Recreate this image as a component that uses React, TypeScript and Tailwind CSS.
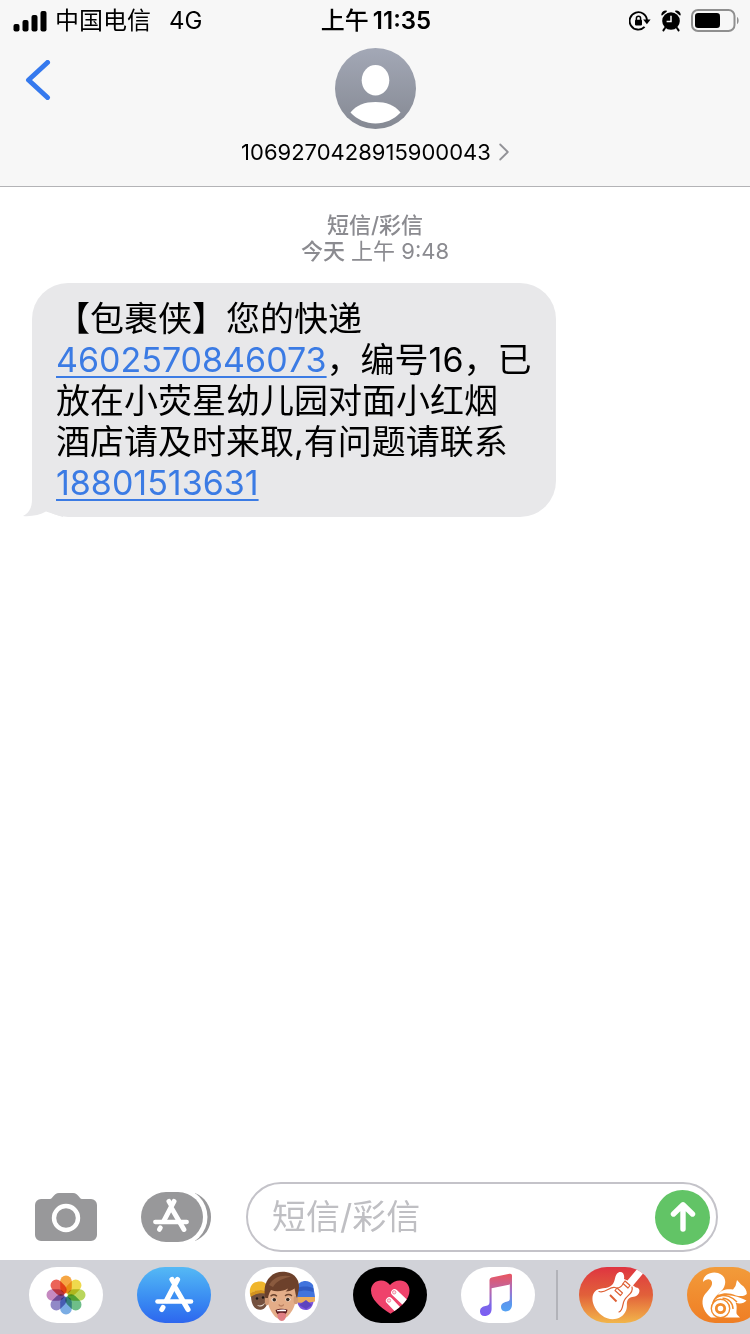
import React from "react";

const FONT = "font-['Inter','Noto_Sans_CJK_SC',sans-serif]";

function SignalBars() {
  return (
    <svg width="34" height="22" viewBox="0 0 34 22" aria-hidden="true">
      <rect x="0.500" y="14" width="6" height="7.500" rx="2" />
      <rect x="9.500" y="10" width="6" height="11.500" rx="2" />
      <rect x="18.500" y="5" width="6" height="16.500" rx="2" />
      <rect x="27.500" y="1" width="6" height="20.500" rx="2" />
    </svg>
  );
}

function RotationLock() {
  return (
    <svg width="22" height="20" viewBox="0 0 22 20" fill="none" aria-hidden="true">
      <path d="M15.6 15.9 A8.7 8.7 0 1 1 18 9.6" stroke="#000" strokeWidth="1.9" />
      <path d="M14.2 8.6 H21.6 L17.9 13.2 Z" fill="#000" />
      <rect x="6" y="8.8" width="7" height="5.6" rx="0.8" fill="#000" />
      <path d="M7.4 9 V7.4 a2.1 2.1 0 0 1 4.2 0 V9" stroke="#000" strokeWidth="1.5" />
    </svg>
  );
}

function AlarmClock() {
  return (
    <svg width="20" height="22" viewBox="0 0 20 22" fill="none" aria-hidden="true">
      <circle cx="10" cy="11" r="8.8" fill="#000" />
      <path d="M1 4.800 C1 2.400 3 1 5.200 1.200 Z M19 4.800 C19 2.400 17 1 14.800 1.200 Z" fill="#000" stroke="#000" strokeWidth="1.400" strokeLinejoin="round" />
      <path d="M4 18 L2.4 20.4 M16 18 L17.6 20.4" stroke="#000" strokeWidth="2" strokeLinecap="round" />
      <path d="M10 5.8 V11.6 H5.6" stroke="#f7f7f7" strokeWidth="1.5" />
    </svg>
  );
}

function Battery() {
  return (
    <svg width="48" height="24" viewBox="0 0 48 24" fill="none" aria-hidden="true">
      <rect x="1" y="1" width="42.5" height="21" rx="6" stroke="#8f8f8f" strokeWidth="2" />
      <rect x="4" y="4" width="25" height="15" rx="3.2" fill="#000" />
      <path d="M46 8 c2.2 1.2 2.2 6 0 7.2 Z" fill="#8f8f8f" />
    </svg>
  );
}

function Avatar() {
  return (
    <svg width="81" height="81" viewBox="0 0 81 81" aria-hidden="true">
      <defs>
        <linearGradient id="avatarFill" x1="0" y1="0" x2="0" y2="1">
          <stop offset="0" stopColor="#a3a8b6" />
          <stop offset="1" stopColor="#858993" />
        </linearGradient>
      </defs>
      <circle cx="40.5" cy="40.5" r="40.5" fill="url(#avatarFill)" />
      <ellipse cx="40.5" cy="32.3" rx="13.8" ry="15.3" fill="#fff" />
      <path d="M15.5 64.5 C21 57 30 54 40.5 54 C51 54 60 57 65.500 64.500 C59 71.500 50 75.500 40.500 75.500 C31 75.500 22 71.500 15.500 64.500 Z" fill="#fff" />
    </svg>
  );
}

function Camera() {
  return (
    <svg width="62" height="48" viewBox="0 0 62 48" aria-hidden="true">
      <path d="M6 6 H15 C18 6 18.500 0 24 0 H38 C43.500 0 44 6 47 6 H56 a6 6 0 0 1 6 6 V42 a6 6 0 0 1 -6 6 H6 a6 6 0 0 1 -6 -6 V12 a6 6 0 0 1 6 -6 Z" fill="#98989a" />
      <circle cx="31" cy="25" r="12" fill="none" stroke="#fff" strokeWidth="4.4" />
    </svg>
  );
}

function StoreStrokes() {
  return (
    <g fill="none" stroke="#fff" strokeLinecap="round" strokeLinejoin="round">
      <path d="M4 24.500 H37.500" strokeWidth="4.600" />
      <path d="M24 2.500 L13 23.500" strokeWidth="5.200" />
      <path d="M18.500 2.500 L20.500 6" strokeWidth="5.200" />
      <path d="M22 11 L34.500 32.500" strokeWidth="5.200" />
      <path d="M9.500 30.500 L8.300 32.500" strokeWidth="5" />
    </g>
  );
}

function AppDrawer() {
  return (
    <svg width="71" height="50" viewBox="0 0 71 50" aria-hidden="true">
      <path d="M54 1 C64 5 70 14 70 25 C70 36 64 45 54 49 Z" fill="#98989a" />
      <rect x="-2" y="-4" width="68.500" height="58" rx="29" fill="#fff" />
      <rect x="0" y="0" width="62" height="50" rx="25" fill="#98989a" />
      <g transform="translate(10.500 7) scale(0.940)">
        <StoreStrokes />
      </g>
    </svg>
  );
}

const petals = [
  { angle: 0, color: "#f6a13a" },
  { angle: 45, color: "#efd743" },
  { angle: 90, color: "#b5d453" },
  { angle: 135, color: "#66bb83" },
  { angle: 180, color: "#74a9e3" },
  { angle: 225, color: "#8b83c4" },
  { angle: 270, color: "#c283bd" },
  { angle: 315, color: "#ea5c50" },
];

function PhotosArt() {
  return (
    <svg viewBox="0 0 74 56" className="size-full" aria-hidden="true">
      <g style={{ isolation: "isolate" }}>
        {petals.map((p) => (
          <rect
            key={p.angle}
            x="31.200"
            y="8.500"
            width="11.600"
            height="18"
            rx="5.800"
            fill={p.color}
            opacity="0.950"
            transform={`rotate(${p.angle} 37 28)`}
            style={{ mixBlendMode: "multiply" }}
          />
        ))}
      </g>
      <circle cx="37" cy="28" r="1.600" fill="#fff" />
    </svg>
  );
}

function StoreArt() {
  return (
    <svg viewBox="0 0 74 56" className="size-full" aria-hidden="true">
      <g transform="translate(16.500 10)">
        <StoreStrokes />
      </g>
    </svg>
  );
}

function MemojiArt() {
  return (
    <svg viewBox="0 0 74 56" className="size-full" aria-hidden="true">
      <path d="M6 26 C5.500 38 10 44 17 42.500 C22 41.500 24 34 23 24 Z" fill="#74513f" />
      <path d="M5 27 C4 19 8 14.500 15 14.500 C20 14.500 23 17 23 24 C17 22 10 23 5 27 Z" fill="#f0b62c" />
      <path d="M5 26.500 C10 22.500 17 22.500 23 24 V27 C16 25.500 10 26.500 5.500 30 Z" fill="#d4931e" />
      <circle cx="12" cy="31.500" r="1.200" fill="#1e1512" />
      <circle cx="18" cy="30.500" r="1.200" fill="#1e1512" />
      <path d="M12 38 C15 39 18 38 20 35.500 C19 39.500 15 41 12 38 Z" fill="#e6d8cd" />
      <path d="M52 27 C51 40 56 43.500 62 43 C68 42 70 33 69 24 Z" fill="#7b55dc" />
      <path d="M52 20 C54 13 64 12 68 18 L70 30 H52 Z" fill="#4174dd" />
      <path d="M52 21 C58 19 64 19 68.500 21.500 V25 C63 23 58 23 52 25 Z" fill="#315cc4" />
      <path d="M52 30 H70 V34.500 C64 36 57 36 52 35.500 Z" fill="#e9ab5c" />
      <path d="M54 38 L61 33 L67 38 L61 42 Z" fill="#5d43bf" />
      <path d="M22 26 C22 33 23 39 26 44 C29 49 31.500 52 36 52 C41 52 44.500 48 47.500 43 C50.500 38 51 32 51 24 C46 14 27 14 22 26 Z" fill="#e4ad88" />
      <ellipse cx="22" cy="34" rx="2.200" ry="4.200" fill="#d29a75" />
      <ellipse cx="50.800" cy="33" rx="2.200" ry="4.200" fill="#d29a75" />
      <path d="M20.500 31 C18.500 24 19.500 15 25 10 C29 5.500 35 4.200 41 5 C50 6 56 14 53.500 24 C53 27 52.500 29 52 31 C50.500 29 50.500 25 49.500 21.500 C47 23.500 44 24.500 40.500 24.500 C42 23.500 42.500 22.500 43 21.500 C38 24.500 31 25 26 23 C24.500 25 23.500 28 23 31 Z" fill="#6d412b" />
      <path d="M24 18 C28 10 38 7 46 9.500 C39 11 31 14 28 20 Z" fill="#8a5a3e" />
      <path d="M26 28.800 C27.500 27.600 30 27.600 31.500 28.800 M40.500 28.500 C42 27.300 45 27.300 46.500 28.500" fill="none" stroke="#6b432e" strokeWidth="1.500" strokeLinecap="round" />
      <ellipse cx="29" cy="32.800" rx="2.600" ry="1.900" fill="#f5efe9" />
      <ellipse cx="43" cy="32.500" rx="2.600" ry="1.900" fill="#f5efe9" />
      <circle cx="29.300" cy="32.800" r="1.800" fill="#3b2a20" />
      <circle cx="42.800" cy="32.500" r="1.800" fill="#3b2a20" />
      <path d="M34.200 38 C35 39.400 37.500 39.400 38.300 38" fill="none" stroke="#b97f60" strokeWidth="1.500" strokeLinecap="round" />
      <path d="M30.500 43 C34 41.500 39 41.500 42.500 42.700 C42 46.500 40 48.500 36.500 48.500 C33 48.500 31 46.500 30.500 43 Z" fill="#5c1c20" />
      <path d="M32 43.200 C35 42.400 38.500 42.400 41 43 V44.200 H32 Z" fill="#fff" />
      <path d="M32.500 47 C34 45.500 39 45.500 40.800 46.800 C41.500 51 39.500 54 36.800 54 C34 54 32 51 32.500 47 Z" fill="#e07f84" />
    </svg>
  );
}

function HeartArt() {
  return (
    <svg viewBox="0 0 74 56" className="size-full" aria-hidden="true">
      <defs>
        <clipPath id="heartClip">
          <path d="M37.500 46.800 C26 39.500 18 32 18 23.500 C18 17.500 22.500 13.500 28 13.500 C32 13.500 35 15.500 37 18 C39 15.500 43 13.500 47 13.500 C52.500 13.500 56.500 17.500 56.500 23.500 C56.500 32 49 39.500 37.500 46.800 Z" />
        </clipPath>
      </defs>
      <g clipPath="url(#heartClip)">
        <rect width="74" height="56" fill="#ef426b" />
        <g stroke="#fff" strokeWidth="6.800" strokeLinecap="round">
          <path d="M36.300 33.700 L50 48" />
          <path d="M41.500 25.500 L59 42" />
        </g>
        <circle cx="36" cy="33.500" r="1.700" fill="#fbdfe5" stroke="#ee7f99" strokeWidth="0.900" />
        <circle cx="41.200" cy="25.300" r="1.700" fill="#fbdfe5" stroke="#ee7f99" strokeWidth="0.900" />
      </g>
    </svg>
  );
}

function MusicArt() {
  return (
    <svg viewBox="0 0 74 56" className="size-full" aria-hidden="true">
      <defs>
        <linearGradient id="noteFill" x1="0" y1="7" x2="0" y2="49" gradientUnits="userSpaceOnUse">
          <stop offset="0" stopColor="#ea5560" />
          <stop offset="0.400" stopColor="#b968a9" />
          <stop offset="0.750" stopColor="#7b67ea" />
          <stop offset="1" stopColor="#7c5cf4" />
        </linearGradient>
        <linearGradient id="noteRight" x1="0" y1="7" x2="0" y2="44" gradientUnits="userSpaceOnUse">
          <stop offset="0" stopColor="#e75765" />
          <stop offset="0.450" stopColor="#a072cb" />
          <stop offset="0.800" stopColor="#5a97ee" />
          <stop offset="1" stopColor="#55a1f3" />
        </linearGradient>
      </defs>
      <path d="M28.500 13 Q28.500 11 30.500 10.500 L48.500 6.700 Q51 6.300 51 8.500 V17 L30.600 21.300 V42 C30.600 46.500 27.500 49 23.500 49 C20.500 49 19 47 19 44.500 C19 41 21.500 39.500 24.500 39 C27.500 38.500 28.500 37.500 28.500 35 Z" fill="url(#noteFill)" />
      <path d="M48.800 16 L51 8 V38 C51 42 48 44.500 44.500 44.500 C41.500 44.500 40 42.500 40 40.300 C40 37 42.300 35.500 45.500 34.800 C48 34.300 48.800 33.500 48.800 31.500 Z" fill="url(#noteRight)" />
    </svg>
  );
}

function GuitarArt() {
  return (
    <svg viewBox="0 0 74 56" className="size-full" aria-hidden="true">
      <path d="M59 1 L64.500 6 L54 18.500 L57 20.500 C61 20.500 61.500 25 58.500 28 C55 31 51.500 29 49 32.500 C46.500 36.500 49.500 40 46 45.500 C41.500 53 31 54.500 23 48.500 C14 42 11 31 15.500 25 C20 19.500 28 23 33 18 C37 14 35 8 39.500 5.500 C43 4 46 7 45 12 L48.500 13.500 Z" fill="#fff" />
      <g fill="none" stroke="#de6034" strokeWidth="1.200" strokeLinecap="round" strokeLinejoin="round">
        <path d="M20 24.500 C26 27 31 19 36 20.500 C39 22 42 20 44 17" />
        <path d="M53 20 C55 26 48 28 45.500 33 C43 37 44.500 43 40 45" />
        <path d="M38 21 L43.500 26 L41.500 28.500 L36 23.500 Z M46 14 L51 18.500 L49 21 L44 16.500 Z" />
      </g>
      <path d="M31 28 L37.500 34.500" stroke="#de6034" strokeWidth="2" />
    </svg>
  );
}

function SquirrelArt() {
  return (
    <svg viewBox="0 0 74 56" className="size-full" aria-hidden="true">
      <path d="M16 15 C16 8 24 4 31 6 C39 8.500 40 16 36 22 C32 27 25 31 25 38 C25 43 28 47 32 50.500 H24 C18 46 14 39 16 31 C18 25 26 21 25 15 C23.500 11 19 12 16 15 Z" fill="#fff" />
      <path d="M31 28 C34 22.500 40 21.500 46 22.500 L48.500 19 L50 13 L54 17.500 C58 20 60 24 59.800 27 C57 29.500 53 29.500 49 28.500 C43 26 37 25.500 31 28 Z" fill="#fff" />
      <path d="M28.500 32.500 C36 25.500 49 28 59.500 33.500 C57 36.500 52.500 37.500 48.500 35.500 C51 40 48.500 45 50 47.500 L53 50.500 H35 C28 49 25 42 28.500 32.500 Z" fill="#fff" />
      <circle cx="33.500" cy="41.500" r="9.200" fill="#fff" stroke="#f18b2b" strokeWidth="1.400" />
      <circle cx="33.500" cy="41.500" r="4.200" fill="#fff" stroke="#f18b2b" strokeWidth="2.800" />
      <path d="M31 29.500 C38 26.500 46 30.500 50 35 M35.500 31.200 C42 31.500 46 36 46 42" fill="none" stroke="#f18b2b" strokeWidth="1.400" />
    </svg>
  );
}

type DrawerApp = { name: string; background: string; Art: () => React.JSX.Element };

const builtInApps: DrawerApp[] = [
  { name: "照片", background: "bg-white", Art: PhotosArt },
  { name: "App Store", background: "bg-linear-to-b from-[#55b9f5] to-[#2e66ee]", Art: StoreArt },
  { name: "拟我表情", background: "bg-white", Art: MemojiArt },
  { name: "Digital Touch", background: "bg-black", Art: HeartArt },
  { name: "音乐", background: "bg-white", Art: MusicArt },
];

const installedApps: DrawerApp[] = [
  { name: "库乐队", background: "bg-linear-to-b from-[#df3340] via-[#e1603a] to-[#f1b54a]", Art: GuitarArt },
  { name: "UC", background: "bg-linear-to-b from-[#f29b3a] to-[#ef7e24]", Art: SquirrelArt },
];

function AppButton({ name, background, Art }: DrawerApp) {
  return (
    <button type="button" aria-label={name} className={`h-14 w-[74px] shrink-0 overflow-hidden rounded-full ${background}`}>
      <Art />
    </button>
  );
}

function StatusBar() {
  return (
    <div className="grid h-[41px] grid-cols-[1fr_auto_1fr] items-center pr-[11px] pl-[13px]">
      <div className="flex items-center gap-2">
        <SignalBars />
        <span className="text-2xl leading-8">中国电信</span>
        <span className="pl-[10px] text-2xl leading-8">4G</span>
      </div>
      <div className="flex items-center gap-1 text-2xl leading-8 font-medium">
        <span>上午</span>
        <span className="font-semibold">11:35</span>
      </div>
      <div className="flex items-center justify-end gap-[10px]">
        <RotationLock />
        <AlarmClock />
        <Battery />
      </div>
    </div>
  );
}

export default function App() {
  return (
    <div className={`flex min-h-screen flex-col overflow-x-hidden bg-white text-black ${FONT}`}>
      <header className="border-b border-[#b3b3b6] bg-[#f7f7f7]">
        <StatusBar />
        <div className="grid grid-cols-[1fr_auto_1fr] items-start px-6 pt-[7px] pb-[18px]">
          <button type="button" aria-label="返回" className="mt-2 w-7 pt-1">
            <svg width="28" height="40" viewBox="0 0 28 40" fill="none" aria-hidden="true">
              <path d="M23.500 2.500 L4.500 20 L23.500 37.500" stroke="#3579ee" strokeWidth="5" strokeLinecap="round" strokeLinejoin="round" />
            </svg>
          </button>
          <button type="button" className="flex flex-col items-center gap-[7px]">
            <Avatar />
            <span className="flex items-center gap-2 text-[22px] leading-8">
              1069270428915900043
              <svg width="10" height="18" viewBox="0 0 10 18" fill="none" aria-hidden="true">
                <path d="M1.200 1.500 L8.800 9 L1.200 16.500" stroke="#929297" strokeWidth="1.800" strokeLinecap="round" strokeLinejoin="round" />
              </svg>
            </span>
          </button>
        </div>
      </header>

      <main className="flex grow flex-col px-8 pt-[25px]">
        <div className="text-center text-[22px] leading-[26px] text-[#8b8b90]">
          <p className="font-medium">短信/彩信</p>
          <p>
            <span className="font-medium">今天</span> 上午 9:48
          </p>
        </div>
        <div className="relative mt-[19px] max-w-[525px] self-start rounded-[36px] bg-[#e8e8ea] px-6 pt-[15px] pb-[14px] text-[34px] leading-[41px]">
          <svg className="absolute bottom-0 -left-[9px]" width="40" height="36" viewBox="0 0 40 36" aria-hidden="true">
            <path d="M9 0 V18 C9 27 6 32 0 35 C8 35.800 17 34 23 30.500 L40 36 V0 Z" fill="#e8e8ea" />
          </svg>
          <p className="relative">
            【包裹侠】您的快递
            <br />
            <a href="tel:4602570846073" className="text-[#3b7be4] underline decoration-2 underline-offset-4">4602570846073</a>
            ，编号16，已
            <br />
            放在小荧星幼儿园对面小红烟
            <br />
            酒店请及时来取,有问题请联系
            <br />
            <a href="tel:18801513631" className="text-[#3b7be4] underline decoration-2 underline-offset-4">18801513631</a>
          </p>
        </div>
      </main>

      <footer>
        <form className="flex items-center pr-8 pb-2 pl-[35px]" onSubmit={(e) => e.preventDefault()}>
          <button type="button" aria-label="相机">
            <Camera />
          </button>
          <button type="button" aria-label="应用" className="ml-11">
            <AppDrawer />
          </button>
          <div className="ml-[34px] flex h-[70px] min-w-0 grow items-center rounded-full border-2 border-[#c4c3c9] pr-[6px] pl-6">
            <input
              type="text"
              aria-label="短信/彩信"
              placeholder="短信/彩信"
              className="min-w-0 grow bg-transparent text-[34px] leading-[48px] outline-none placeholder:text-[#bfbfc3]"
            />
            <button type="submit" aria-label="发送" className="flex size-[55px] shrink-0 items-center justify-center rounded-full bg-[#62c466]">
              <svg width="26" height="32" viewBox="0 0 26 32" fill="none" aria-hidden="true">
                <path d="M13 28 V4 M3.500 13 L13 3.800 L22.500 13" stroke="#fff" strokeWidth="5.400" strokeLinecap="round" strokeLinejoin="round" />
              </svg>
            </button>
          </div>
        </form>
        <nav aria-label="应用" className="flex items-center gap-[34px] overflow-hidden bg-[#d1d2d8] pt-[7px] pb-[11px] pl-[29px]">
          {builtInApps.map((app) => (
            <AppButton key={app.name} {...app} />
          ))}
          <div className="-mx-[13px] h-[50px] w-[2px] shrink-0 bg-[#b2b3b9]" />
          {installedApps.map((app) => (
            <AppButton key={app.name} {...app} />
          ))}
        </nav>
      </footer>
    </div>
  );
}
